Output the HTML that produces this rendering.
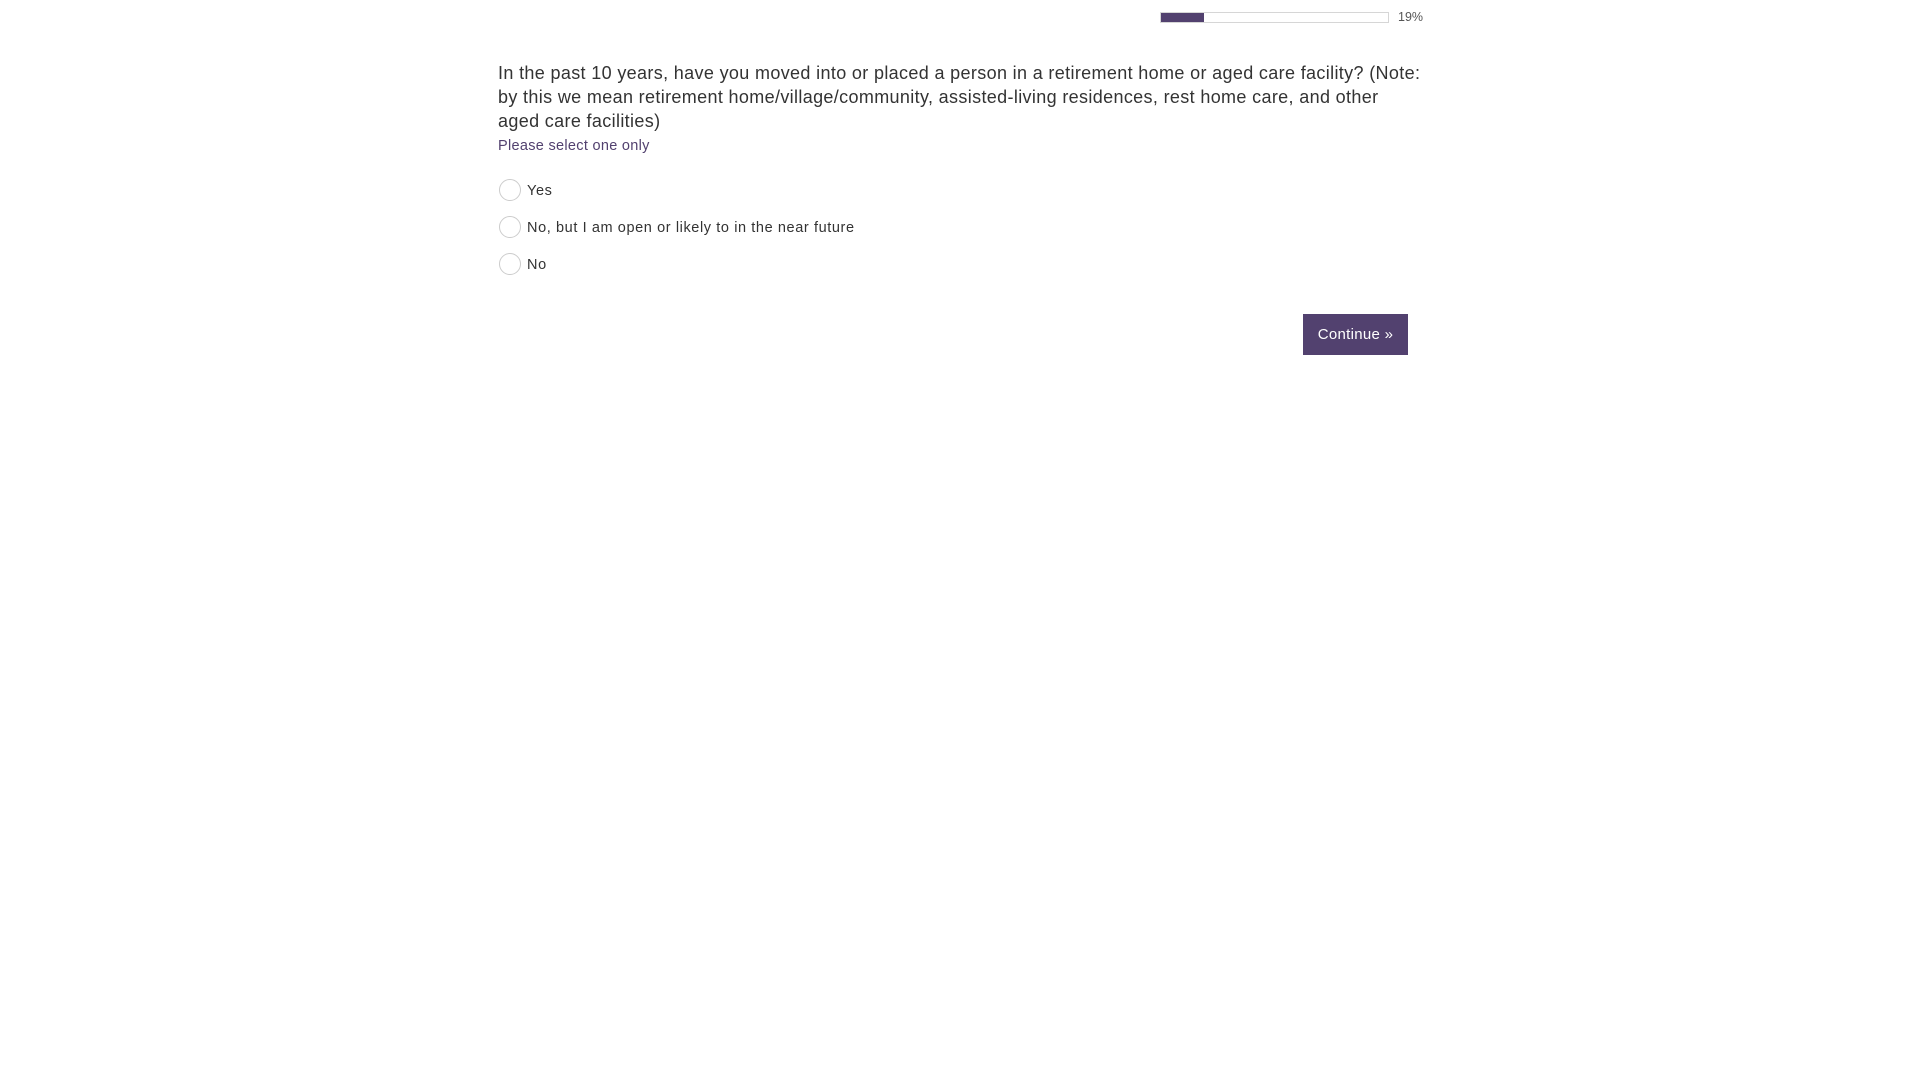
<!DOCTYPE html>
<html><head><meta charset="utf-8"><style>
body{margin:0;width:1920px;height:1080px;background:#fff;font-family:"Liberation Sans",sans-serif;color:#333;position:relative;overflow:hidden}
.bar{position:absolute;left:1160px;top:12px;width:227px;height:9px;border:1px solid #d6d6d6;background:#fff}
.fill{position:absolute;left:0;top:0;width:43px;height:9px;background:#52416f}
.pct{position:absolute;left:1398px;top:10px;font-size:12.5px;color:#555}
.q{position:absolute;left:498px;top:61px;font-size:18px;line-height:24px;letter-spacing:0.35px;white-space:nowrap;color:#333}
.hint{position:absolute;left:498px;top:138px;font-size:14.5px;color:#52416f;letter-spacing:0.3px}
.opt{position:absolute;left:499px;height:22px;font-size:14.5px;letter-spacing:0.6px}
.opt i{position:absolute;left:0;top:0;width:20px;height:20px;border:1px solid #ccc;border-radius:50%}
.opt span{position:absolute;left:28px;top:4px;white-space:nowrap}
.btn{position:absolute;left:1303px;top:314px;width:105px;height:41px;background:#52416f;color:#fff;font-size:15px;line-height:41px;text-align:center;letter-spacing:0.3px}
</style></head><body>
<div class="bar"><div class="fill"></div></div>
<div class="pct">19%</div>
<div class="q">In the past 10 years, have you moved into or placed a person in a retirement home or aged care facility? (Note:<br>by this we mean retirement home/village/community, assisted-living residences, rest home care, and other<br>aged care facilities)</div>
<div class="hint">Please select one only</div>
<div class="opt" style="top:179px"><i></i><span>Yes</span></div>
<div class="opt" style="top:216px"><i></i><span>No, but I am open or likely to in the near future</span></div>
<div class="opt" style="top:253px"><i></i><span>No</span></div>
<div class="btn">Continue »</div>
</body></html>
